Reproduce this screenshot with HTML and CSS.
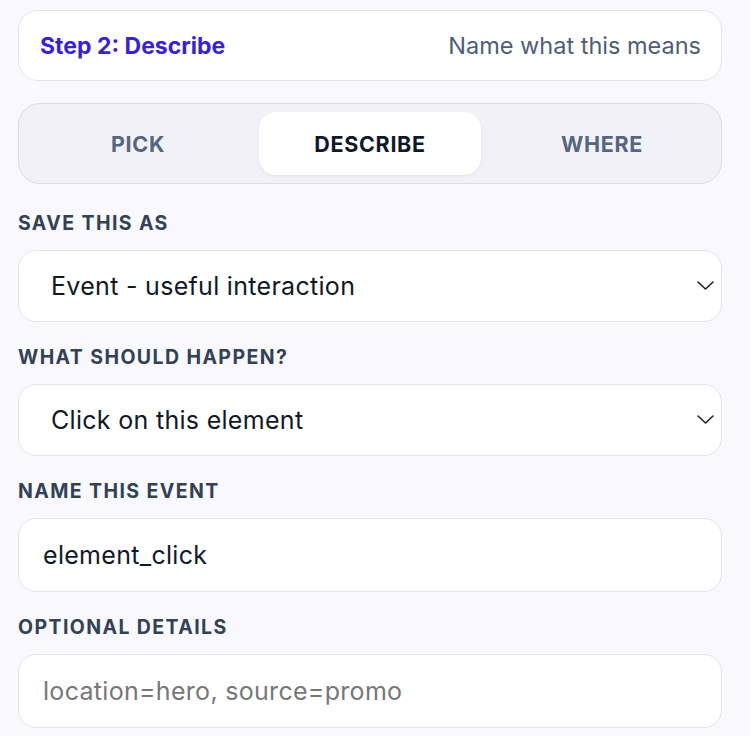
FILE: index.html
```html
<!DOCTYPE html>
<html lang="en">
<head>
<meta charset="utf-8">
<title>Step 2: Describe</title>
<link rel="stylesheet" href="styles.css">
</head>
<body>
<div class="panel">
  <div class="step-card">
    <span class="step-title">Step 2: Describe</span>
    <span class="step-hint">Name what this means</span>
  </div>

  <div class="tabs">
    <div class="tab">PICK</div>
    <div class="tab tab-active">DESCRIBE</div>
    <div class="tab">WHERE</div>
  </div>

  <div class="fields">
    <div class="field">
      <label class="field-label" for="save-as">SAVE THIS AS</label>
      <div class="select-wrap">
        <select id="save-as" class="control control-select">
          <option>Event - useful interaction</option>
        </select>
        <svg class="chevron" viewBox="0 0 17 9" width="17" height="9" aria-hidden="true"><path d="M1 1 L8.5 8 L16 1"/></svg>
      </div>
    </div>

    <div class="field">
      <label class="field-label" for="happen">WHAT SHOULD HAPPEN?</label>
      <div class="select-wrap">
        <select id="happen" class="control control-select">
          <option>Click on this element</option>
        </select>
        <svg class="chevron" viewBox="0 0 17 9" width="17" height="9" aria-hidden="true"><path d="M1 1 L8.5 8 L16 1"/></svg>
      </div>
    </div>

    <div class="field">
      <label class="field-label" for="event-name">NAME THIS EVENT</label>
      <input id="event-name" class="control control-input" type="text" value="element_click">
    </div>

    <div class="field">
      <label class="field-label" for="details">OPTIONAL DETAILS</label>
      <input id="details" class="control control-input" type="text" placeholder="location=hero, source=promo">
    </div>
  </div>
</div>
</body>
</html>
```

FILE: styles.css
```css
* {
  box-sizing: border-box;
}

html, body {
  margin: 0;
  padding: 0;
  background: #f8f8fd;
}

body {
  font-family: Inter, "Noto Sans", "Liberation Sans", sans-serif;
  color: #111827;
}

.panel {
  display: flex;
  flex-direction: column;
  padding: 10px 28px 0 18px;
}

.step-card {
  height: 71px;
  display: flex;
  align-items: center;
  justify-content: space-between;
  padding: 0 20px 0 21px;
  background: #ffffff;
  border: 1.5px solid #e4e1fb;
  border-radius: 20px;
  margin-bottom: 22px;
}

.step-title {
  font-size: 23px;
  font-weight: 700;
  color: #3722d6;
}

.step-hint {
  font-size: 23.5px;
  font-weight: 400;
  color: #4d5d78;
}

.tabs {
  height: 81px;
  display: grid;
  grid-template-columns: 1fr 1fr 1fr;
  gap: 10px;
  padding: 8px;
  background: #f1f1f7;
  border: 1px solid #dcdce3;
  border-radius: 22px;
}

.tab {
  display: flex;
  align-items: center;
  justify-content: center;
  border-radius: 17px;
  font-size: 21.5px;
  font-weight: 700;
  letter-spacing: 0.7px;
  color: #56667f;
}

.tab-active {
  background: #ffffff;
  color: #0f172a;
  box-shadow: 0 1px 3px rgba(15, 23, 42, 0.07);
}

.fields {
  display: flex;
  flex-direction: column;
  gap: 23px;
  margin-top: 27px;
}

.field {
  display: flex;
  flex-direction: column;
}

.field-label {
  font-size: 19.5px;
  line-height: 24px;
  font-weight: 700;
  letter-spacing: 1.4px;
  color: #334155;
  margin-bottom: 15px;
}

.select-wrap {
  position: relative;
}

.control {
  display: block;
  width: 100%;
  margin: 0;
  background: #ffffff;
  border: 1.5px solid #e3e3e8;
  border-radius: 18px;
  font-family: Inter, "Noto Sans", "Liberation Sans", sans-serif;
  font-size: 25px;
  letter-spacing: 0.3px;
  color: #111827;
  outline: none;
}

.control-select {
  height: 72px;
  padding: 0 40px 0 32px;
  -webkit-appearance: none;
  appearance: none;
}

.control-input {
  height: 74px;
  padding: 0 24px;
}

.control-input::placeholder {
  color: #777777;
  opacity: 1;
}

.chevron {
  position: absolute;
  right: 8px;
  top: 31px;
  fill: none;
  stroke: #1f1f1f;
  stroke-width: 1.6;
  stroke-linecap: round;
  stroke-linejoin: round;
  pointer-events: none;
}
```
